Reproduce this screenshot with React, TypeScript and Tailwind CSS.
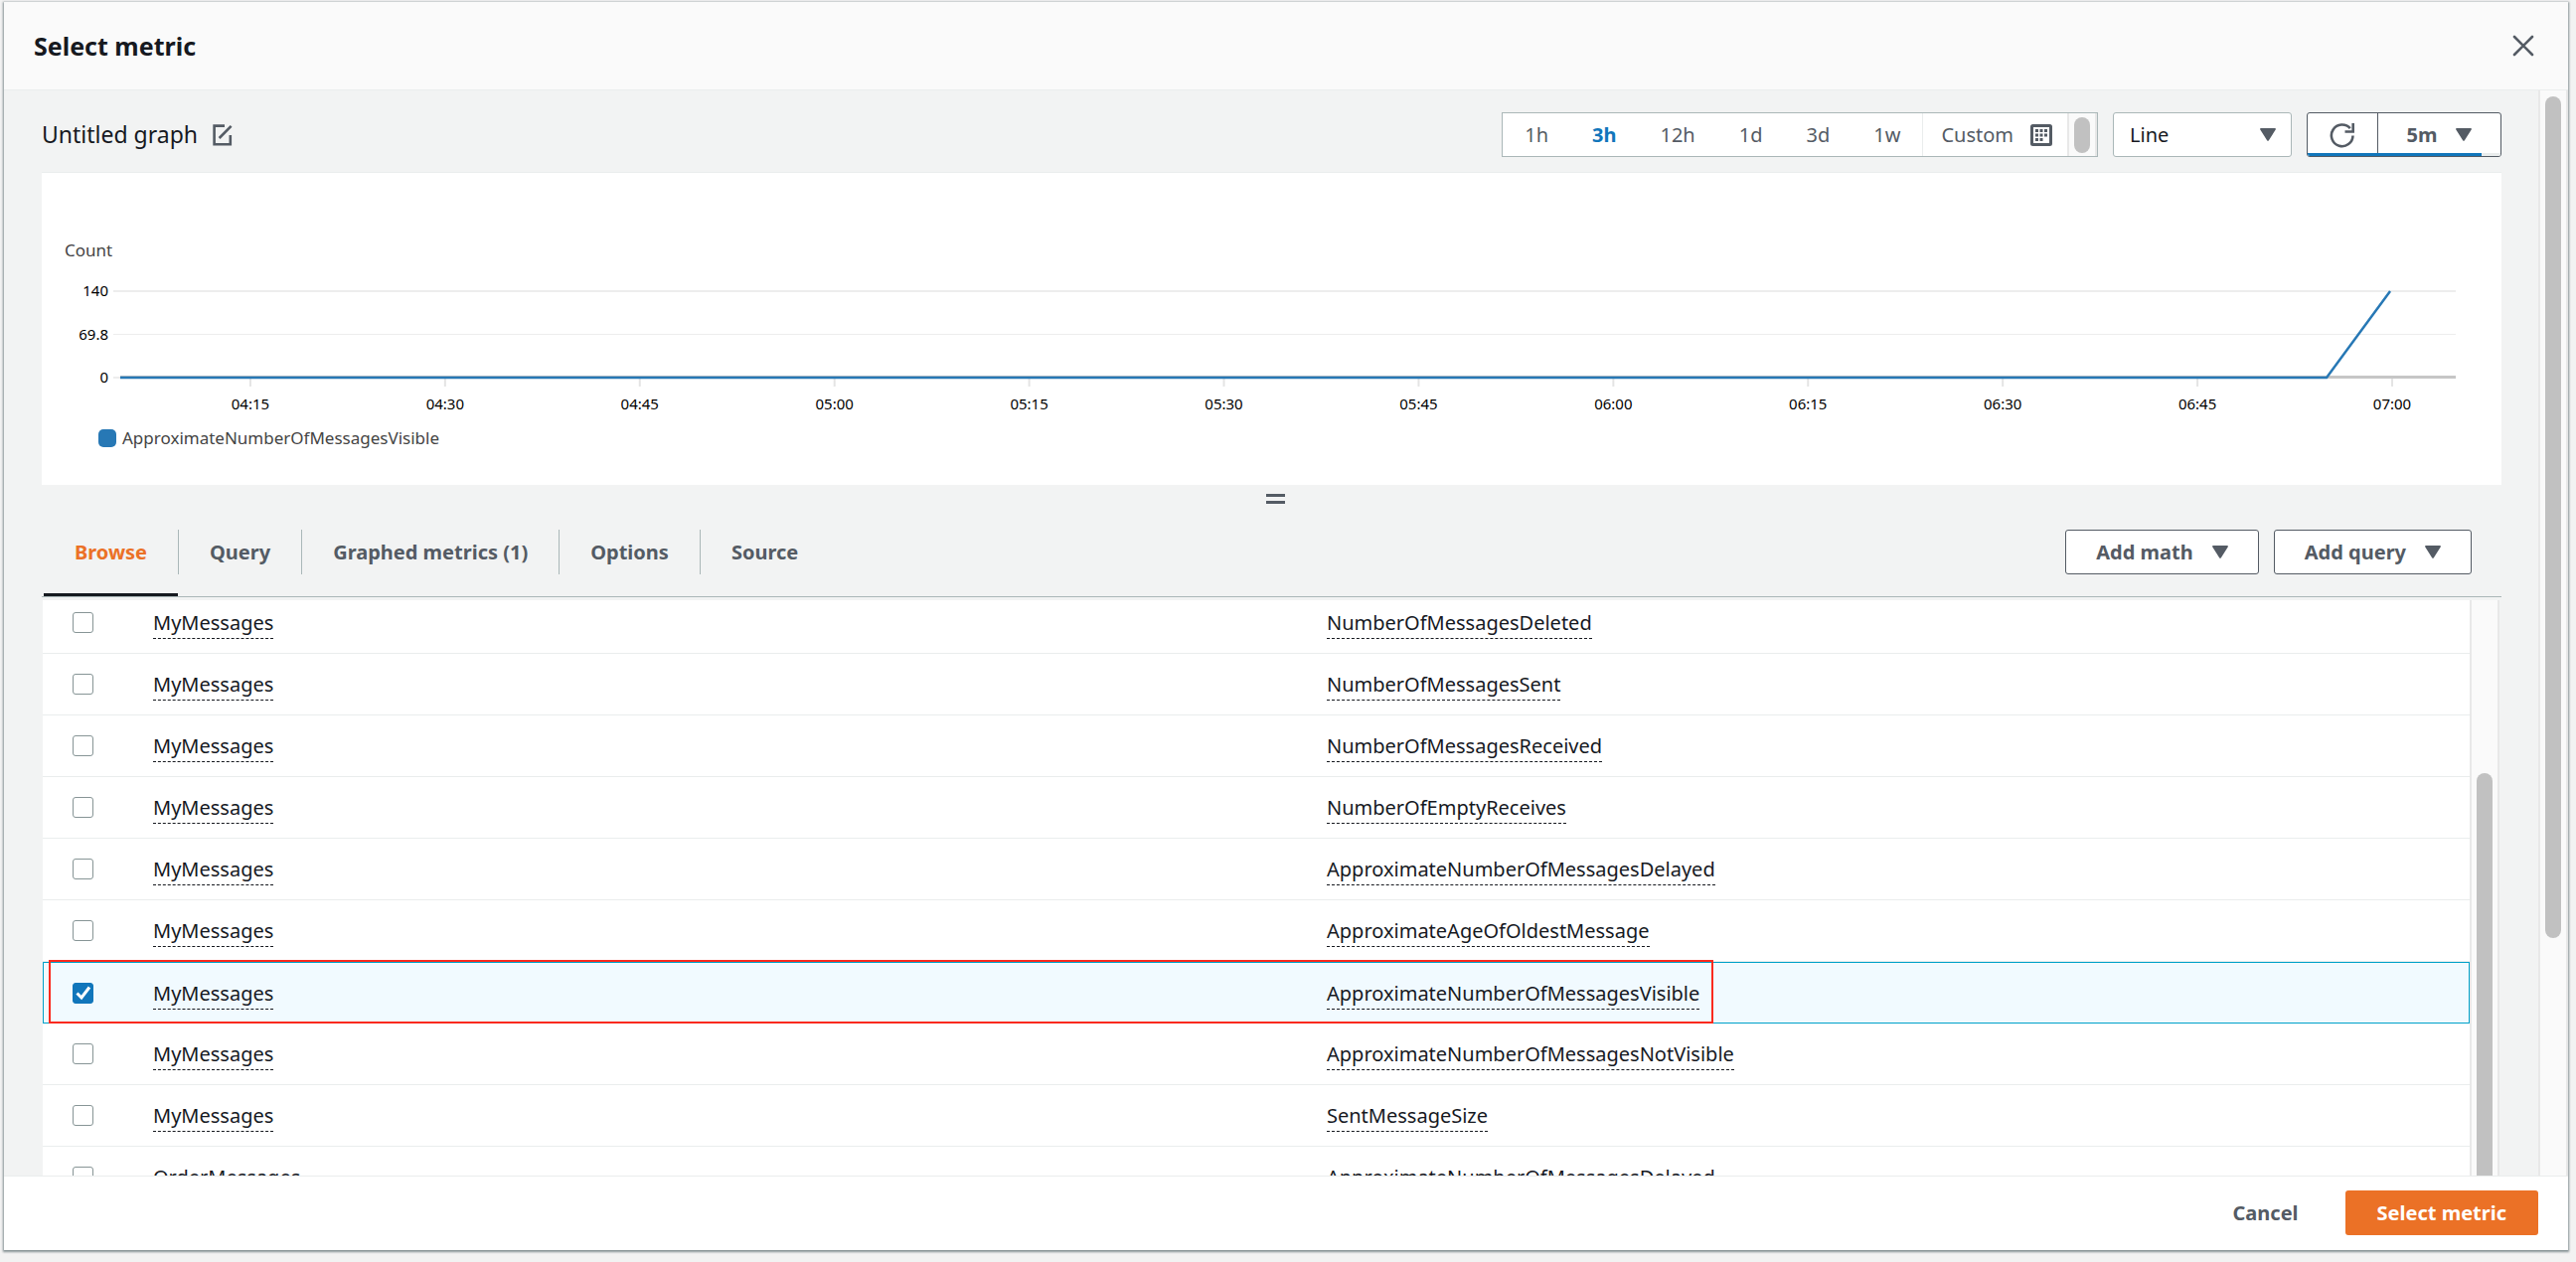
import { useState } from 'react';
import type { ReactNode } from 'react';
import clsx from 'clsx';

const RANGES = ['1h', '3h', '12h', '1d', '3d', '1w'];

const TABS = ['Browse', 'Query', 'Graphed metrics (1)', 'Options', 'Source'];

const TICKS = ['04:15', '04:30', '04:45', '05:00', '05:15', '05:30', '05:45', '06:00', '06:15', '06:30', '06:45', '07:00'];

const METRICS = [
  { id: 1, queue: 'MyMessages', name: 'NumberOfMessagesDeleted' },
  { id: 2, queue: 'MyMessages', name: 'NumberOfMessagesSent' },
  { id: 3, queue: 'MyMessages', name: 'NumberOfMessagesReceived' },
  { id: 4, queue: 'MyMessages', name: 'NumberOfEmptyReceives' },
  { id: 5, queue: 'MyMessages', name: 'ApproximateNumberOfMessagesDelayed' },
  { id: 6, queue: 'MyMessages', name: 'ApproximateAgeOfOldestMessage' },
  { id: 7, queue: 'MyMessages', name: 'ApproximateNumberOfMessagesVisible' },
  { id: 8, queue: 'MyMessages', name: 'ApproximateNumberOfMessagesNotVisible' },
  { id: 9, queue: 'MyMessages', name: 'SentMessageSize' },
  { id: 10, queue: 'OrderMessages', name: 'ApproximateNumberOfMessagesDelayed' },
];

function Caret({ className }: { className?: string }) {
  return (
    <svg viewBox="0 0 16 13" className={clsx('h-[13px] w-4 fill-[#545b64]', className)} aria-hidden="true">
      <path d="M1.2 0h13.6c.9 0 1.4.9.9 1.6L8.9 12.2c-.4.7-1.4.7-1.8 0L.3 1.6C-.2.9.3 0 1.2 0z" />
    </svg>
  );
}

function EditIcon() {
  return (
    <svg viewBox="0 0 20 22" className="h-[22px] w-5" fill="none" stroke="#545b64" strokeWidth="2.6" aria-hidden="true">
      <path d="M12 1.6H1.6v18.6h16.2V11" />
      <path d="M18.6 1.8 6.6 14" />
    </svg>
  );
}

function CalendarIcon() {
  return (
    <svg viewBox="0 0 22 22" className="size-[22px]" aria-hidden="true">
      <rect x="1.5" y="1.5" width="19" height="19" rx="1" fill="none" stroke="#545b64" strokeWidth="3" />
      <path
        fill="#545b64"
        d="M5 5h3v3H5zM9.5 5h3v3h-3zM14 5h3v3h-3zM5 9.5h3v3H5zM9.5 9.5h3v3h-3zM14 9.5h3v3h-3zM5 14h3v3H5zM9.5 14h3v3h-3z"
      />
    </svg>
  );
}

function RefreshIcon() {
  return (
    <svg viewBox="0 0 26 26" className="size-[26px]" fill="none" stroke="#545b64" strokeWidth="2.6" aria-hidden="true">
      <path d="M23.5 13.5A10.8 10.8 0 1 1 20.8 6.2" />
      <path d="M23.7 1v8.500H15.500" />
    </svg>
  );
}

function ScrollTrack({ children, className }: { children: ReactNode; className?: string }) {
  return (
    <div className={clsx('flex w-[30px] shrink-0 justify-center border-x-2 border-[#e8e8e8] bg-[#fafafa]', className)}>
      {children}
    </div>
  );
}

function OutlineButton({ label }: { label: string }) {
  return (
    <button
      type="button"
      className="flex h-[45px] items-center gap-[19px] rounded-[3px] border border-[#545b64] bg-white px-[30px] text-xl font-bold text-[#545b64]"
    >
      {label}
      <Caret />
    </button>
  );
}

function Chart() {
  const first = 210;
  const step = 196;
  return (
    <svg viewBox="0 0 2476 150" className="block w-full" role="img" aria-label="ApproximateNumberOfMessagesVisible over time">
      <path d="M72 18H2430" stroke="#ededed" strokeWidth="2" />
      <path d="M72 61.5H2430" stroke="#ededed" strokeWidth="1" />
      <path d="M72 105H80" stroke="#ededed" strokeWidth="2" />
      <path d="M79 104.5H2430" stroke="#c6c6c6" strokeWidth="3" />
      <g fontSize="15" fill="#000" textAnchor="end">
        <text x="67" y="23">140</text>
        <text x="67" y="67">69.8</text>
        <text x="67" y="110">0</text>
      </g>
      <g fontSize="15" fill="#000" textAnchor="middle">
        {TICKS.map((t, i) => (
          <g key={t}>
            <path d={`M${first + i * step} 106v8`} stroke="#e4e4e4" strokeWidth="2" />
            <text x={first + i * step} y="137">
              {t}
            </text>
          </g>
        ))}
      </g>
      <path d="M79 105H2300L2364 18" fill="none" stroke="#2778b5" strokeWidth="2.5" />
    </svg>
  );
}

export default function App() {
  const [range, setRange] = useState('3h');
  const [tab, setTab] = useState('Browse');
  const [selected, setSelected] = useState<number[]>([7]);

  const toggle = (id: number) =>
    setSelected((prev) => (prev.includes(id) ? prev.filter((x) => x !== id) : [...prev, id]));

  return (
    <div className="h-screen overflow-hidden bg-[#f2f2f2] pt-0.5 pr-2 pb-3 pl-1 font-['Noto_Sans',sans-serif] text-xl text-[#16191f]">
      <div
        role="dialog"
        aria-labelledby="dialog-title"
        className="flex h-full flex-col bg-white shadow-[0_1px_2px_1px_rgba(0,28,36,0.45)]"
      >
        <header className="flex h-[89px] shrink-0 items-center justify-between border-b border-[#eaeded] bg-[#fafafa] pr-[34px] pl-[30px]">
          <h1 id="dialog-title" className="text-[25px] font-bold">
            Select metric
          </h1>
          <button type="button" aria-label="Close">
            <svg viewBox="0 0 22 22" className="size-[22px]" stroke="#545b64" strokeWidth="2.6" strokeLinecap="round">
              <path d="M2 2l18 18M20 2L2 20" />
            </svg>
          </button>
        </header>

        <div className="flex min-h-0 flex-1 bg-[#f2f3f3]">
          <main className="flex min-w-0 flex-1 flex-col pt-[22px] pr-[37px] pl-[38px]">
            <div className="flex h-[45px] shrink-0 items-center">
              <h2 className="text-[23px]">Untitled graph</h2>
              <button type="button" aria-label="Edit title" className="ml-[15px]">
                <EditIcon />
              </button>

              <div className="ml-auto flex h-[45px] border border-[#aab7b8] bg-white text-[#545b64]">
                <div className="flex">
                  {RANGES.map((r) => (
                    <button
                      key={r}
                      type="button"
                      onClick={() => setRange(r)}
                      className={clsx('px-[22px]', r === range && 'font-bold text-[#1176bb]')}
                    >
                      {r}
                    </button>
                  ))}
                </div>
                <button type="button" className="flex items-center gap-[17px] border-l border-[#eaeded] pr-[15px] pl-[18px]">
                  Custom
                  <CalendarIcon />
                </button>
                <ScrollTrack className="items-center">
                  <div className="h-9 w-4 rounded-full bg-[#c1c1c1]" />
                </ScrollTrack>
              </div>

              <div className="relative ml-[15px] h-[45px] w-[180px]">
                <select
                  aria-label="Graph type"
                  className="size-full appearance-none rounded-[3px] border border-[#aab7b8] bg-white pl-4"
                  defaultValue="Line"
                >
                  <option>Line</option>
                  <option>Stacked area</option>
                  <option>Number</option>
                </select>
                <Caret className="pointer-events-none absolute top-4 right-4" />
              </div>

              <div className="relative ml-[15px] flex h-[45px] w-[196px] overflow-hidden rounded-[3px] border border-[#545b64] bg-white font-bold text-[#545b64]">
                <button
                  type="button"
                  aria-label="Refresh"
                  className="flex w-[71px] items-center justify-center border-r border-[#545b64]"
                >
                  <RefreshIcon />
                </button>
                <button type="button" className="flex flex-1 items-center justify-center gap-[19px]">
                  5m
                  <Caret />
                </button>
                <div className="absolute inset-x-0 bottom-0 h-[3px] bg-[#eaeded]">
                  <div className="h-full w-[90%] bg-[#1176bb]" />
                </div>
              </div>
            </div>

            <section className="mt-[15px] h-[315px] shrink-0 border-t border-[#eaeded] bg-white pt-16 text-[17px] text-[#444]">
              <p className="pl-[23px] leading-[28px]">Count</p>
              <div className="mt-[9px]">
                <Chart />
              </div>
              <div className="mt-0.5 flex items-center gap-1.5 pl-[57px] leading-[28px]">
                <span className="h-[18px] w-[18px] rounded-[5px] bg-[#2778b5]" />
                ApproximateNumberOfMessagesVisible
              </div>
            </section>

            <div className="flex shrink-0 justify-center pt-[9px] pl-2">
              <button type="button" aria-label="Resize graph" className="flex flex-col gap-1">
                <span className="h-[3px] w-[19px] bg-[#545b64]" />
                <span className="h-[3px] w-[19px] bg-[#545b64]" />
              </button>
            </div>

            <div className="mt-1 flex h-[90px] shrink-0 items-center justify-between border-b border-[#aab7b8] pr-[30px] pl-0.5">
              <div role="tablist" className="flex h-full items-center font-bold text-[#545b64]">
                {TABS.map((t, i) => (
                  <div key={t} className="flex h-full items-center">
                    {i > 0 && <span className="h-[45px] w-px bg-[#aab7b8]" />}
                    <button
                      type="button"
                      role="tab"
                      aria-selected={t === tab}
                      onClick={() => setTab(t)}
                      className={clsx(
                        'h-full border-y-3 border-transparent px-[31px]',
                        t === tab && 'border-b-[#16191f] text-[#eb7126]',
                      )}
                    >
                      {t}
                    </button>
                  </div>
                ))}
              </div>
              <div className="flex gap-[15px]">
                <OutlineButton label="Add math" />
                <OutlineButton label="Add query" />
              </div>
            </div>

            <div className="mr-0.5 ml-px flex min-h-0 flex-1 pt-[3px]">
              <div className="min-w-0 flex-1 overflow-hidden bg-white">
                <table className="-mt-2 w-full table-fixed border-separate border-spacing-0">
                  <colgroup>
                    <col className="w-[111px]" />
                    <col />
                    <col className="w-[1150px]" />
                  </colgroup>
                  <tbody>
                    {METRICS.map((m) => {
                      const on = selected.includes(m.id);
                      const line = on ? 'border-y border-[#00a1c9]' : 'border-b border-[#eaeded]';
                      return (
                        <tr key={m.id} className={clsx('relative h-[62px]', on && 'bg-[#f1faff]')}>
                          <td className={clsx('p-0', line, on ? 'border-l pl-[29px]' : 'pl-[30px]')}>
                            <input
                              type="checkbox"
                              id={`metric-${m.id}`}
                              checked={on}
                              onChange={() => toggle(m.id)}
                              className="peer sr-only"
                            />
                            <label
                              htmlFor={`metric-${m.id}`}
                              aria-label={`${m.queue} ${m.name}`}
                              className="flex size-[21px] items-center justify-center rounded-[3px] border border-[#879596] bg-white peer-checked:border-[#1176bb] peer-checked:bg-[#1176bb]"
                            >
                              {on && (
                                <svg viewBox="0 0 16 16" className="size-4" fill="none" stroke="#fff" strokeWidth="3">
                                  <path d="M1.5 8.5 6 13l8-10.500" />
                                </svg>
                              )}
                            </label>
                            {on && (
                              <div className="pointer-events-none absolute -top-0.5 bottom-0 left-1.5 w-[68.6%] border-2 border-[#fa2a1e]" />
                            )}
                          </td>
                          <td className={clsx('p-0 pt-0.5', line)}>
                            <span className="inline-block border-b border-dashed border-[#16191f] leading-[30px]">{m.queue}</span>
                          </td>
                          <td className={clsx('p-0 pt-0.5', line, on && 'border-r')}>
                            <span className="inline-block border-b border-dashed border-[#16191f] leading-[30px]">{m.name}</span>
                          </td>
                        </tr>
                      );
                    })}
                  </tbody>
                </table>
              </div>
              <ScrollTrack className="items-end">
                <div className="h-[70%] w-4 rounded-t-full bg-[#c1c1c1]" />
              </ScrollTrack>
            </div>
          </main>

          <ScrollTrack className="pt-1.5">
            <div className="h-[78%] w-4 rounded-full bg-[#c1c1c1]" />
          </ScrollTrack>
        </div>

        <footer className="flex shrink-0 items-center justify-end gap-[17px] border-t border-[#eaeded] bg-white pt-3.5 pr-[30px] pb-[15px] font-bold">
          <button type="button" className="h-[45px] px-[30px] text-[#545b64]">
            Cancel
          </button>
          <button type="button" className="h-[45px] rounded-[3px] bg-[#eb7126] px-[32px] text-white">
            Select metric
          </button>
        </footer>
      </div>
    </div>
  );
}
